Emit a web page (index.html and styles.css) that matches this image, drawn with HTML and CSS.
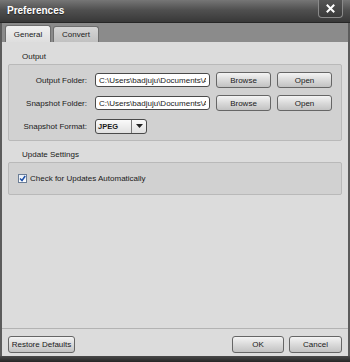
FILE: index.html
```html
<!DOCTYPE html>
<html lang="en">
<head>
    <meta charset="UTF-8">
    <meta name="viewport" content="width=device-width, initial-scale=1.0">
    <title>Preferences</title>
    <link rel="stylesheet" href="styles.css">
</head>
<body>

    <div class="window">
        <div class="titlebar">
            <span class="title">Preferences</span>
            <div class="close-btn">
                <svg width="9" height="9" viewBox="0 0 9 9">
                    <path d="M1.5 1.5 L7.5 7.5 M7.5 1.5 L1.5 7.5" stroke="#fff" stroke-width="2" stroke-linecap="square"/>
                </svg>
            </div>
        </div>

        <div class="tabs">
            <div class="tab active">General</div>
            <div class="tab">Convert</div>
        </div>

        <div class="content">
            <div class="group-title">Output</div>
            <div class="panel output-panel">
                <label class="field-label">Output Folder:</label>
                <input class="path-input" type="text" value="C:\Users\badjuju\Documents\Aiseesoft Studio">
                <button class="btn">Browse</button>
                <button class="btn">Open</button>

                <label class="field-label">Snapshot Folder:</label>
                <input class="path-input" type="text" value="C:\Users\badjuju\Documents\Aiseesoft Studio">
                <button class="btn">Browse</button>
                <button class="btn">Open</button>

                <label class="field-label">Snapshot Format:</label>
                <div class="select">
                    <span class="select-value">JPEG</span>
                    <span class="select-arrow">
                        <svg width="7" height="4" viewBox="0 0 7 4"><path d="M0 0 H7 L3.5 4 Z" fill="#222"/></svg>
                    </span>
                </div>
            </div>

            <div class="group-title">Update Settings</div>
            <div class="panel update-panel">
                <label class="check-row">
                    <span class="checkbox">
                        <svg width="7" height="7" viewBox="0 0 7 7"><path d="M1 3.5 L3 5.5 L6.2 1" stroke="#1c4fa8" stroke-width="1.5" fill="none"/></svg>
                    </span>
                    Check for Updates Automatically
                </label>
            </div>

            <div class="footer">
                <button class="btn restore-btn">Restore Defaults</button>
                <div class="footer-right">
                    <button class="btn ok-btn">OK</button>
                    <button class="btn cancel-btn">Cancel</button>
                </div>
            </div>
        </div>
        <div class="bottom-frame"></div>
    </div>

</body>
</html>
```

FILE: styles.css
```css
body {
    margin: 0;
    font-family: 'Liberation Sans', Arial, sans-serif;
    font-size: 8px;
    color: #1a1a1a;
    background-color: #2a2a2a;
}
.window {
    width: 350px;
    height: 362px;
    display: flex;
    flex-direction: column;
    overflow: hidden;
}
.titlebar {
    height: 23px;
    box-sizing: border-box;
    display: flex;
    align-items: center;
    justify-content: space-between;
    padding: 0 7px 1px 7px;
    background: linear-gradient(#767676, #505050 45%, #383838);
    border-bottom: 1px solid #262626;
}
.title {
    color: #fff;
    font-weight: bold;
    font-size: 10px;
    text-shadow: 0 1px 1px rgba(0, 0, 0, 0.5);
}
.close-btn {
    width: 25px;
    height: 18px;
    margin-top: -4px;
    box-sizing: border-box;
    display: flex;
    align-items: center;
    justify-content: center;
    border: 1px solid #8a8a8a;
    border-top: none;
    border-radius: 0 0 4px 4px;
    background: linear-gradient(#555, #3a3a3a);
}
.tabs {
    height: 19px;
    box-sizing: border-box;
    display: flex;
    align-items: flex-end;
    gap: 2px;
    padding-left: 3px;
    background-color: #8b8b8b;
    border-left: 2px solid #5c5c5c;
    border-right: 2px solid #5c5c5c;
}
.tab {
    width: 46px;
    height: 16px;
    box-sizing: border-box;
    display: flex;
    align-items: center;
    justify-content: center;
    border: 1px solid #6e6e6e;
    border-bottom: none;
    border-radius: 3px 3px 0 0;
    background: linear-gradient(#d6d6d6, #c0c0c0);
    color: #222;
}
.tab.active {
    height: 17px;
    background: linear-gradient(#f0f0f0, #dedede);
}
.content {
    flex: 1;
    display: flex;
    flex-direction: column;
    padding: 8px 6px 0 6px;
    background-color: #dcdcdc;
    border-left: 2px solid #5c5c5c;
    border-right: 2px solid #5c5c5c;
}
.group-title {
    height: 14px;
    line-height: 14px;
    padding-left: 14px;
}
.panel {
    background-color: #d1d1d1;
    border: 1px solid #b9b9b9;
    border-radius: 2px;
}
.output-panel {
    display: grid;
    grid-template-columns: 80px 115px 55px 55px;
    grid-auto-rows: 16px;
    column-gap: 6px;
    row-gap: 7px;
    align-items: center;
    padding: 7px 0 6px 0;
    margin-bottom: 7px;
}
.field-label {
    text-align: right;
    padding-right: 2px;
}
.path-input {
    width: 115px;
    height: 14px;
    box-sizing: border-box;
    padding: 0 3px;
    font-family: inherit;
    font-size: 8px;
    color: #1a1a1a;
    background: #fff;
    border: 1px solid #4a4a4a;
    border-radius: 3px;
    outline: none;
}
.btn {
    height: 16px;
    box-sizing: border-box;
    padding: 0 4px;
    font-family: inherit;
    font-size: 8px;
    color: #1a1a1a;
    border: 1px solid #666;
    border-radius: 3px;
    background: linear-gradient(#f4f4f4, #dadada 50%, #c2c2c2);
}
.select {
    width: 52px;
    height: 15px;
    box-sizing: border-box;
    display: flex;
    border: 1px solid #4a4a4a;
    border-radius: 3px;
    background: linear-gradient(#fafafa, #e0e0e0);
}
.select-value {
    flex: 1;
    padding-left: 2px;
    line-height: 13px;
    font-weight: bold;
    font-size: 7.5px;
}
.select-arrow {
    width: 14px;
    display: flex;
    align-items: center;
    justify-content: center;
    border-left: 1px solid #777;
}
.update-panel {
    padding: 8px 9px;
}
.check-row {
    height: 15px;
    display: flex;
    align-items: center;
    gap: 3px;
}
.checkbox {
    width: 9px;
    height: 9px;
    box-sizing: border-box;
    display: flex;
    align-items: center;
    justify-content: center;
    border: 1px solid #6b7d96;
    background: linear-gradient(#e8eef6, #fff);
}
.footer {
    margin-top: auto;
    display: flex;
    justify-content: space-between;
    align-items: flex-start;
    height: 28px;
    box-sizing: border-box;
    padding: 7px 6px 0 6px;
    margin-left: -6px;
    margin-right: -6px;
    border-top: 1px solid #b3b3b3;
}
.footer .btn {
    height: 17px;
}
.restore-btn {
    width: 67px;
    padding: 0;
}
.footer-right {
    display: flex;
    gap: 5px;
}
.ok-btn {
    width: 52px;
}
.cancel-btn {
    width: 53px;
}
.bottom-frame {
    height: 6px;
    background: linear-gradient(#4a4a4a, #262626);
}
```
